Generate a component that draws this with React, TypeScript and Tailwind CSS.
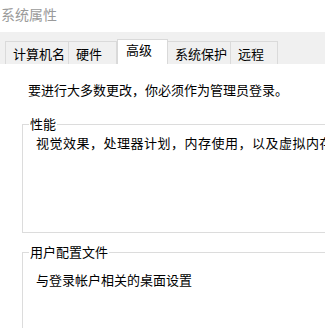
import { FC } from 'react';

const tabs = [
  { label: '计算机名', width: 'w-[64px]' },
  { label: '硬件', width: 'w-[48px]' },
  { label: '高级', width: 'w-[51px]', active: true },
  { label: '系统保护', width: 'w-[63px]' },
  { label: '远程', width: 'w-[47px]' },
];

const GroupBox: FC<{ title: string; text: string; className: string; textClass: string }> = ({
  title,
  text,
  className,
  textClass,
}) => (
  <div className={`relative ml-[22px] w-[420px] border border-[#dcdcdc] ${className}`}>
    <span className="absolute -top-[9px] left-[6px] bg-white px-[1px] leading-[16px]">{title}</span>
    <p className={`pl-[13px] leading-[16px] ${textClass}`}>{text}</p>
  </div>
);

const App: FC = () => {
  return (
    <div
      className="w-[325px] h-[328px] overflow-hidden bg-white text-[13px] text-black"
      style={{ fontFamily: '"Noto Sans CJK SC", "Microsoft YaHei", sans-serif' }}
    >
      <div className="h-[32px] pt-[6px] pl-[1px] text-[14px] leading-[17px] text-[#9a9a9a]">系统属性</div>

      <div className="flex h-[32px] items-end bg-[#f0f0f0] pl-[5px]">
        {tabs.map((tab) =>
          tab.active ? (
            <div
              key={tab.label}
              className={`${tab.width} h-[25px] bg-white border-x border-t border-[#d9d9d9] pl-[8px] pt-[2px] leading-[16px]`}
            >
              {tab.label}
            </div>
          ) : (
            <div
              key={tab.label}
              className={`${tab.width} h-[23px] border-r border-t border-[#dadada] pl-[7px] pt-[4px] leading-[16px] first:border-l`}
            >
              {tab.label}
            </div>
          )
        )}
      </div>

      <div className="pl-[28px] pt-[18px] leading-[16px]">要进行大多数更改，你必须作为管理员登录。</div>

      <div className="pt-[26px]">
        <GroupBox
          title="性能"
          text="视觉效果，处理器计划，内存使用，以及虚拟内存"
          className="h-[109px]"
          textClass="pt-[10px] tracking-[0.5px]"
        />
      </div>

      <div className="pt-[19px]">
        <GroupBox
          title="用户配置文件"
          text="与登录帐户相关的桌面设置"
          className="h-[100px]"
          textClass="pt-[19px]"
        />
      </div>
    </div>
  );
};

export default App;
